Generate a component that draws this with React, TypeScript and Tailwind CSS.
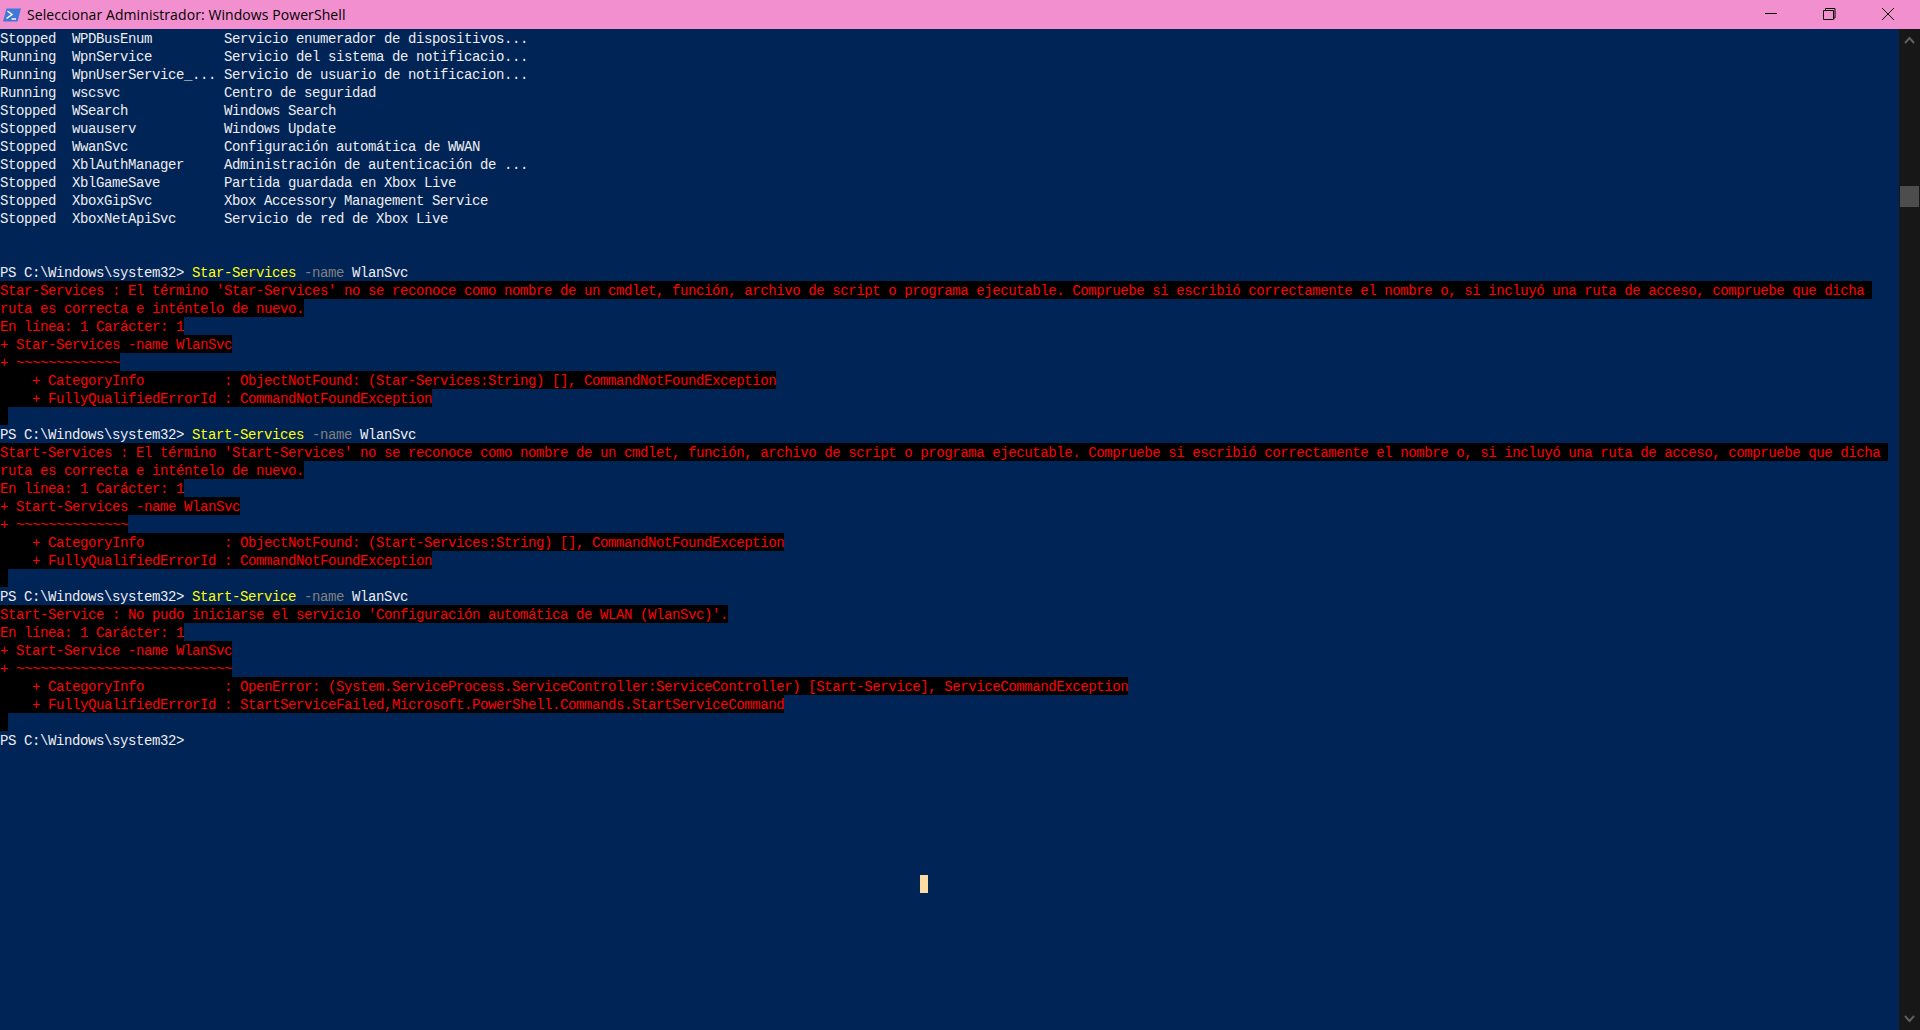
import React from 'react'

const services = [
  'Stopped  WPDBusEnum         Servicio enumerador de dispositivos...',
  'Running  WpnService         Servicio del sistema de notificacio...',
  'Running  WpnUserService_... Servicio de usuario de notificacion...',
  'Running  wscsvc             Centro de seguridad',
  'Stopped  WSearch            Windows Search',
  'Stopped  wuauserv           Windows Update',
  'Stopped  WwanSvc            Configuración automática de WWAN',
  'Stopped  XblAuthManager     Administración de autenticación de ...',
  'Stopped  XblGameSave        Partida guardada en Xbox Live',
  'Stopped  XboxGipSvc         Xbox Accessory Management Service',
  'Stopped  XboxNetApiSvc      Servicio de red de Xbox Live',
]

const prompt = 'PS C:\\Windows\\system32> '

function Command({ name }: { name: string }) {
  return (
    <div className="h-[18px]">
      <span className="text-[#eeedf0]">{prompt}</span>
      <span className="text-[#ffff00]">{name}</span>
      <span className="text-[#808080]"> -name</span>
      <span className="text-[#eeedf0]"> WlanSvc</span>
    </div>
  )
}

function ErrorLine({ text }: { text: string }) {
  return (
    <div className="h-[18px]">
      <span className="bg-black text-[#ff0000] inline-block h-[18px]">{text}</span>
    </div>
  )
}

export default function App() {
  return (
    <div className="relative w-[1920px] h-[1030px] overflow-hidden flex flex-col bg-[#012456] font-['Liberation_Mono',monospace]">
      <div className="h-[29px] shrink-0 bg-[#f28fcf] flex items-center font-['Open_Sans',sans-serif] text-[14px] tracking-[0.08px] text-black">
        <svg className="ml-[3px] w-[18px] h-[14px]" viewBox="0 0 18 14">
          <path d="M3.500 0.500H18L14.500 13.500H0z" fill="#3f78d8" />
          <path d="M4.500 3l4.500 3.500-5.500 4" fill="none" stroke="#fff" strokeWidth="1.500" />
          <path d="M8.500 11h4.500" stroke="#fff" strokeWidth="1.400" />
        </svg>
        <span className="ml-[6px]">Seleccionar Administrador: Windows PowerShell</span>
        <div className="ml-auto flex items-center h-full">
          <svg className="w-[51px] h-[29px]" viewBox="0 0 51 29"><path d="M12 13.500h12" stroke="#000" /></svg>
          <svg className="w-[58px] h-[29px]" viewBox="0 0 58 29" fill="none" stroke="#000"><path d="M19.500 10.500h10v9h-10z" /><path d="M21.500 10V8.500h9.500v9.500h-1.500" /></svg>
          <svg className="w-[58px] h-[29px]" viewBox="0 0 58 29" stroke="#000"><path d="M20 8l12 12M32 8L20 20" /></svg>
        </div>
      </div>
      <div className="flex-1 flex min-h-0">
        <div className="flex-1 text-[14px] leading-[20px] tracking-[-0.4px] whitespace-pre text-[#eeedf0]">
          {services.map((s) => <div key={s} className="h-[18px]">{s}</div>)}
          <div className="h-[36px]" />
          <Command name="Star-Services" />
          <ErrorLine text="Star-Services : El término 'Star-Services' no se reconoce como nombre de un cmdlet, función, archivo de script o programa ejecutable. Compruebe si escribió correctamente el nombre o, si incluyó una ruta de acceso, compruebe que dicha " />
          <ErrorLine text="ruta es correcta e inténtelo de nuevo." />
          <ErrorLine text="En línea: 1 Carácter: 1" />
          <ErrorLine text="+ Star-Services -name WlanSvc" />
          <ErrorLine text="+ ~~~~~~~~~~~~~" />
          <ErrorLine text="    + CategoryInfo          : ObjectNotFound: (Star-Services:String) [], CommandNotFoundException" />
          <ErrorLine text="    + FullyQualifiedErrorId : CommandNotFoundException" />
          <ErrorLine text=" " />
          <Command name="Start-Services" />
          <ErrorLine text="Start-Services : El término 'Start-Services' no se reconoce como nombre de un cmdlet, función, archivo de script o programa ejecutable. Compruebe si escribió correctamente el nombre o, si incluyó una ruta de acceso, compruebe que dicha " />
          <ErrorLine text="ruta es correcta e inténtelo de nuevo." />
          <ErrorLine text="En línea: 1 Carácter: 1" />
          <ErrorLine text="+ Start-Services -name WlanSvc" />
          <ErrorLine text="+ ~~~~~~~~~~~~~~" />
          <ErrorLine text="    + CategoryInfo          : ObjectNotFound: (Start-Services:String) [], CommandNotFoundException" />
          <ErrorLine text="    + FullyQualifiedErrorId : CommandNotFoundException" />
          <ErrorLine text=" " />
          <Command name="Start-Service" />
          <ErrorLine text="Start-Service : No pudo iniciarse el servicio 'Configuración automática de WLAN (WlanSvc)'." />
          <ErrorLine text="En línea: 1 Carácter: 1" />
          <ErrorLine text="+ Start-Service -name WlanSvc" />
          <ErrorLine text="+ ~~~~~~~~~~~~~~~~~~~~~~~~~~~" />
          <ErrorLine text="    + CategoryInfo          : OpenError: (System.ServiceProcess.ServiceController:ServiceController) [Start-Service], ServiceCommandException" />
          <ErrorLine text="    + FullyQualifiedErrorId : StartServiceFailed,Microsoft.PowerShell.Commands.StartServiceCommand" />
          <ErrorLine text=" " />
          <div className="h-[18px]">{prompt.trimEnd()}</div>
        </div>
        <div className="w-[21px] shrink-0 bg-[#171717] flex flex-col items-center">
          <svg className="mt-[7px] w-[11px] h-[8px]" viewBox="0 0 11 8" fill="none" stroke="#606060" strokeWidth="2"><path d="M1 7l4.500-5 4.500 5" /></svg>
          <div className="mt-[142px] w-[19px] h-[21px] bg-[#4d4d4d]" />
          <svg className="mt-auto mb-[7px] w-[11px] h-[8px]" viewBox="0 0 11 8" fill="none" stroke="#606060" strokeWidth="2"><path d="M1 1l4.500 5 4.500-5" /></svg>
        </div>
      </div>
      {/* mouse i-beam block sits over the console */}
      <div className="absolute left-[920px] top-[875px] w-[8px] h-[18px] bg-[#fedba0]" />
    </div>
  )
}
